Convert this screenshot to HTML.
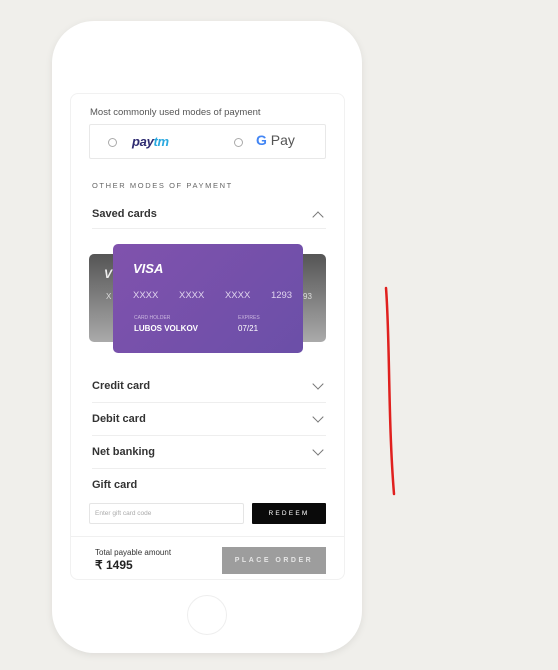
<!DOCTYPE html>
<html><head><meta charset="utf-8"><style>
*{box-sizing:border-box;margin:0;padding:0}
body{width:558px;height:670px;background:#f0efeb;font-family:"Liberation Sans",sans-serif;position:relative;overflow:hidden;color:#222}
.phone{position:absolute;left:52px;top:21px;width:310px;height:632px;background:#fff;border-radius:42px;box-shadow:0 2px 8px rgba(0,0,0,.08)}
.panel{position:absolute;left:70px;top:93px;width:275px;height:487px;border:1px solid #f1f1f1;border-radius:8px;background:#fff}
.abs{position:absolute}
.t1{left:90px;top:107px;font-size:9.5px;color:#555}
.box{left:89px;top:124px;width:237px;height:35px;border:1px solid #e8e8e8;border-radius:2px}
.radio{width:9px;height:9px;border:1px solid #aaa;border-radius:50%}
.other{left:92px;top:181px;font-size:7.5px;letter-spacing:1.6px;color:#666}
.row{left:92px;width:234px;font-size:11px;font-weight:bold;color:#333;border-bottom:1px solid #eee;height:33px;padding-top:10px}
.chev{position:absolute;right:4px;top:10px;width:8px;height:8px;border-right:1.3px solid #777;border-bottom:1.3px solid #777;transform:rotate(45deg)}
.up{transform:rotate(-135deg);top:14px}
.card{border-radius:5px}
</style></head><body>
<div class="phone"></div>
<div class="panel"></div>
<div class="abs t1">Most commonly used modes of payment</div>
<div class="abs box"></div>
<div class="abs radio" style="left:108px;top:138px"></div>
<div class="abs" style="left:132px;top:134px;font-size:13px;font-weight:bold;font-style:italic;letter-spacing:-.3px"><span style="color:#2d2a70">pay</span><span style="color:#2aa9e0">tm</span></div>
<div class="abs radio" style="left:234px;top:138px"></div>
<div class="abs" style="left:256px;top:132px;font-size:14px;color:#555"><b style="color:#4285f4">G</b> Pay</div>
<div class="abs other">OTHER MODES OF PAYMENT</div>
<div class="abs row" style="top:199px;height:30px;padding-top:9px">Saved cards<div class="chev up"></div></div>
<div class="abs card" style="left:89px;top:254px;width:237px;height:88px;background:linear-gradient(#555,#aaa)"></div>
<div class="abs" style="left:104px;top:267px;color:#eee;font-weight:bold;font-style:italic;font-size:12px">V</div>
<div class="abs" style="left:106px;top:292px;color:#ddd;font-size:8px">X</div>
<div class="abs" style="left:303px;top:292px;color:#ddd;font-size:8px">93</div>
<div class="abs card" style="left:113px;top:244px;width:190px;height:109px;background:linear-gradient(135deg,#8052ad,#6b4fa8);color:#fff">
<div class="abs" style="left:20px;top:17px;font-size:13px;font-weight:bold;font-style:italic">VISA</div>
<div class="abs" style="left:20px;top:46px;font-size:9.5px;word-spacing:18px;color:#e0d4ee;font-weight:300">XXXX XXXX XXXX 1293</div>
<div class="abs" style="left:21px;top:71px;font-size:5px;color:#cbb7e0">CARD HOLDER</div>
<div class="abs" style="left:125px;top:71px;font-size:5px;color:#cbb7e0">EXPIRES</div>
<div class="abs" style="left:21px;top:80px;font-size:8px;font-weight:bold">LUBOS VOLKOV</div>
<div class="abs" style="left:125px;top:80px;font-size:8px">07/21</div>
</div>
<div class="abs row" style="top:370px">Credit card<div class="chev"></div></div>
<div class="abs row" style="top:403px">Debit card<div class="chev"></div></div>
<div class="abs row" style="top:436px">Net banking<div class="chev"></div></div>
<div class="abs row" style="top:469px;border:none">Gift card</div>
<div class="abs" style="left:89px;top:503px;width:155px;height:21px;border:1px solid #e5e5e5;border-radius:2px;font-size:6.5px;color:#aaa;padding:6px 5px">Enter gift card code</div>
<div class="abs" style="left:252px;top:503px;width:74px;height:21px;background:#0a0a0a;color:#fff;font-size:6.5px;letter-spacing:2.2px;text-align:center;line-height:21px;border-radius:1px">REDEEM</div>
<div class="abs" style="left:71px;top:536px;width:273px;border-top:1px solid #f0f0f0"></div>
<div class="abs" style="left:95px;top:548px;font-size:8px;color:#333">Total payable amount</div>
<div class="abs" style="left:95px;top:558px;font-size:12px;font-weight:bold;color:#222">₹ 1495</div>
<div class="abs" style="left:222px;top:547px;width:104px;height:27px;background:#9d9d9d;color:#e5e5e5;font-size:7px;letter-spacing:2.5px;text-align:center;line-height:27px;font-weight:bold">PLACE ORDER</div>
<div class="abs" style="left:187px;top:595px;width:40px;height:40px;border:1px solid #eee;border-radius:50%"></div>
<svg class="abs" style="left:0;top:0" width="558" height="670"><path d="M386 288 C390 340,388 420,394 494" stroke="#e0201e" stroke-width="2.5" fill="none" stroke-linecap="round"/></svg>
</body></html>
